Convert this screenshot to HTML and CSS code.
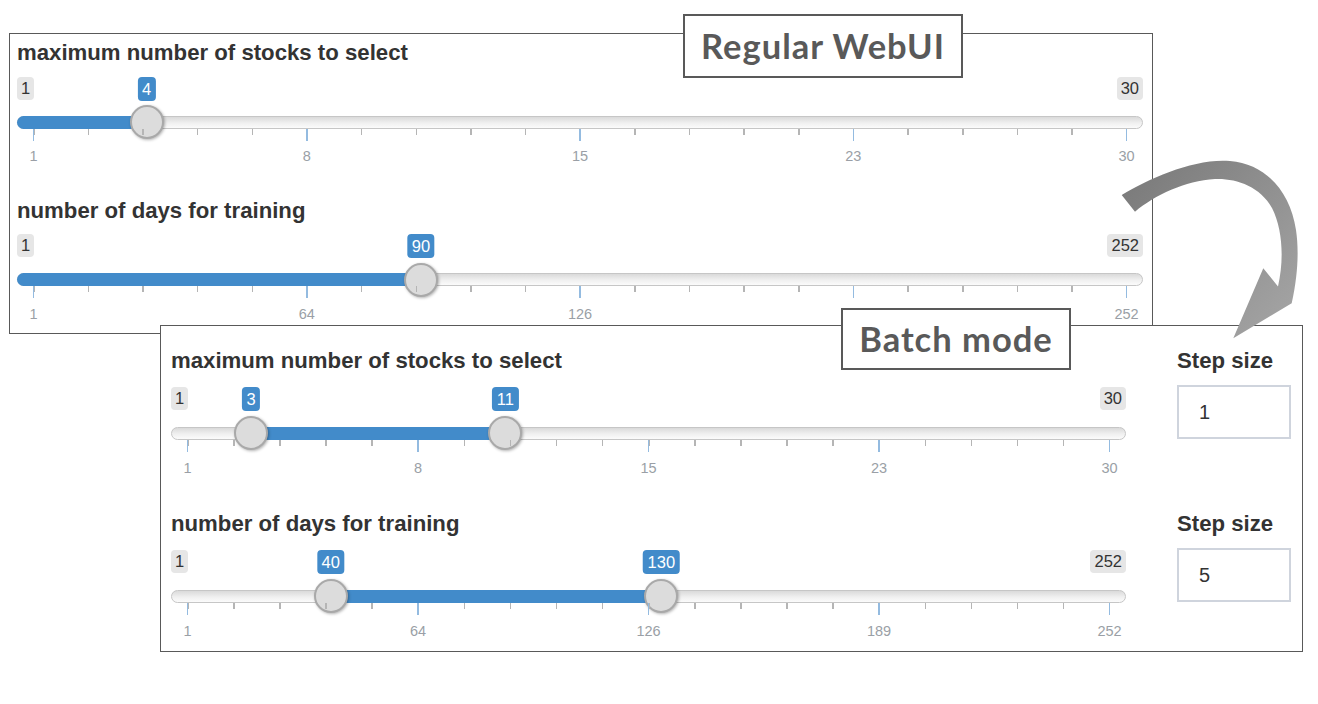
FILE: index.html
```html
<!DOCTYPE html>
<html lang="en">
<head>
<meta charset="utf-8">
<title>Regular WebUI vs Batch mode</title>
<link rel="stylesheet" href="styles.css">
</head>
<body>
<div class="canvas">

  <section class="panel panel-regular">
    <div class="field">
      <div class="field-label">maximum number of stocks to select</div>
      <div class="slider" style="--b:0.10345">
        <div class="irs-top">
          <span class="minmax">1</span><span class="minmax">30</span>
          <span class="bubble to">4</span>
        </div>
        <div class="track">
          <div class="line"></div>
          <div class="bar single"></div>
          <div class="handle to"></div>
        </div>
        <div class="grid">
          <div class="minor"></div>
          <div class="marks">
            <div class="mark"><i></i><span>1</span></div>
            <div class="mark"><i></i><span>8</span></div>
            <div class="mark"><i></i><span>15</span></div>
            <div class="mark"><i></i><span>23</span></div>
            <div class="mark"><i></i><span>30</span></div>
          </div>
        </div>
      </div>
    </div>

    <div class="field">
      <div class="field-label">number of days for training</div>
      <div class="slider" style="--b:0.35458">
        <div class="irs-top">
          <span class="minmax">1</span><span class="minmax">252</span>
          <span class="bubble to">90</span>
        </div>
        <div class="track">
          <div class="line"></div>
          <div class="bar single"></div>
          <div class="handle to"></div>
        </div>
        <div class="grid">
          <div class="minor"></div>
          <div class="marks">
            <div class="mark"><i></i><span>1</span></div>
            <div class="mark"><i></i><span>64</span></div>
            <div class="mark"><i></i><span>126</span></div>
            <div class="mark"><i></i><span>189</span></div>
            <div class="mark"><i></i><span>252</span></div>
          </div>
        </div>
      </div>
    </div>
  </section>

  <section class="panel panel-batch">
    <div class="field">
      <div class="field-label">maximum number of stocks to select</div>
      <div class="slider" style="--a:0.06897;--b:0.34483">
        <div class="irs-top">
          <span class="minmax">1</span><span class="minmax">30</span>
          <span class="bubble from">3</span>
          <span class="bubble to">11</span>
        </div>
        <div class="track">
          <div class="line"></div>
          <div class="bar range"></div>
          <div class="handle from"></div>
          <div class="handle to"></div>
        </div>
        <div class="grid">
          <div class="minor"></div>
          <div class="marks">
            <div class="mark"><i></i><span>1</span></div>
            <div class="mark"><i></i><span>8</span></div>
            <div class="mark"><i></i><span>15</span></div>
            <div class="mark"><i></i><span>23</span></div>
            <div class="mark"><i></i><span>30</span></div>
          </div>
        </div>
      </div>
    </div>
    <div class="step">
      <div class="field-label">Step size</div>
      <input class="step-input" type="text" value="1" readonly>
    </div>

    <div class="field">
      <div class="field-label">number of days for training</div>
      <div class="slider" style="--a:0.15538;--b:0.51394">
        <div class="irs-top">
          <span class="minmax">1</span><span class="minmax">252</span>
          <span class="bubble from">40</span>
          <span class="bubble to">130</span>
        </div>
        <div class="track">
          <div class="line"></div>
          <div class="bar range"></div>
          <div class="handle from"></div>
          <div class="handle to"></div>
        </div>
        <div class="grid">
          <div class="minor"></div>
          <div class="marks">
            <div class="mark"><i></i><span>1</span></div>
            <div class="mark"><i></i><span>64</span></div>
            <div class="mark"><i></i><span>126</span></div>
            <div class="mark"><i></i><span>189</span></div>
            <div class="mark"><i></i><span>252</span></div>
          </div>
        </div>
      </div>
    </div>
    <div class="step">
      <div class="field-label">Step size</div>
      <input class="step-input" type="text" value="5" readonly>
    </div>
  </section>

  <div class="tag tag-regular">Regular WebUI</div>
  <div class="tag tag-batch">Batch mode</div>

  <svg class="arrow" width="218" height="200" viewBox="0 0 218 200" aria-hidden="true">
    <defs>
      <linearGradient id="arrowFill" gradientUnits="userSpaceOnUse" x1="20" y1="40" x2="190" y2="190">
        <stop offset="0" stop-color="#7b7b7b"/>
        <stop offset="1" stop-color="#a6a6a6"/>
      </linearGradient>
    </defs>
    <path fill="url(#arrowFill)" d="M 21.7 45 C 50 28, 95 8, 130 11 C 165 14, 190 40, 196 80 C 199 100, 198 125, 191.7 153.3 L 133.3 188.3 L 163.3 118.3 L 178 136.4 C 184 110, 183 80, 172 58 C 160 36, 135 28, 115 29 C 85 31, 55 45, 35 61.7 Z"/>
  </svg>

</div>
</body>
</html>
```

FILE: styles.css
```css
* { box-sizing: border-box; }

html, body {
  margin: 0;
  padding: 0;
  background: #fff;
}

body {
  font-family: "Liberation Sans", Arial, Helvetica, sans-serif;
  color: #333;
}

.canvas {
  position: relative;
  width: 1318px;
  height: 704px;
  overflow: hidden;
}

/* ---------- panels ---------- */
.panel {
  background: #fff;
  border: 1px solid #595959;
}

.panel-regular {
  --m1: 10.5px;
  --m2: 15px;
  --m3: 7.5px;
  margin: 33px 0 0 9px;
  width: 1144px;
  height: 301px;
  padding: 6px 9px 0 7px;
  display: flex;
  flex-direction: column;
  gap: 33px;
}

.panel-batch {
  --m1: 12.5px;
  --m2: 16px;
  --m3: 8px;
  position: absolute;
  left: 160px;
  top: 325px;
  width: 1143px;
  height: 327px;
  padding: 22px 11px 0 10px;
  display: grid;
  grid-template-columns: 955px 114px;
  column-gap: 51px;
  row-gap: 35.5px;
  align-content: start;
}

.field-label {
  font-weight: bold;
  font-size: 22.2px;
  line-height: 26px;
  color: #333;
  white-space: nowrap;
}

/* ---------- slider ---------- */
.slider {
  --inset: 16.5px;
  --a: 0;
  --b: 0;
}

.irs-top {
  position: relative;
  height: 24px;
  margin-top: var(--m1);
  display: flex;
  justify-content: space-between;
  align-items: flex-start;
}

.minmax {
  height: 23px;
  line-height: 23px;
  padding: 0 4px;
  font-size: 16.5px;
  color: #333;
  background: #e6e6e6;
  border-radius: 4px;
}

.bubble {
  position: absolute;
  top: 0;
  height: 24px;
  line-height: 24px;
  padding: 0 4.5px;
  font-size: 16.5px;
  color: #fff;
  background: #428bca;
  border-radius: 4px;
  white-space: nowrap;
  transform: translateX(-50%);
}

.bubble.from { left: calc(var(--inset) + (100% - 2 * var(--inset)) * var(--a)); }
.bubble.to   { left: calc(var(--inset) + (100% - 2 * var(--inset)) * var(--b)); }

.track {
  position: relative;
  height: 13px;
  margin-top: var(--m2);
}

.line {
  position: absolute;
  inset: 0;
  border: 1px solid #c6c6c6;
  border-radius: 8px;
  background: linear-gradient(#dadada, #f0f0f0 55%, #fbfbfb);
}

.bar {
  position: absolute;
  top: 0;
  bottom: 0;
  background: #428bca;
}

.bar.single {
  left: 0;
  width: calc(var(--inset) + (100% - 2 * var(--inset)) * var(--b));
  border-radius: 8px 0 0 8px;
}

.bar.range {
  left: calc(var(--inset) + (100% - 2 * var(--inset)) * var(--a));
  width: calc((100% - 2 * var(--inset)) * (var(--b) - var(--a)));
}

.handle {
  position: absolute;
  top: 50%;
  width: 34px;
  height: 34px;
  margin: -17px 0 0 -17px;
  border-radius: 50%;
  border: 2px solid #a9a9a9;
  background: #dcdcdc;
  box-shadow: 1px 1px 3px rgba(0, 0, 0, 0.3);
}

.handle.from { left: calc(var(--inset) + (100% - 2 * var(--inset)) * var(--a)); }
.handle.to   { left: calc(var(--inset) + (100% - 2 * var(--inset)) * var(--b)); }

.grid {
  position: relative;
  height: 36px;
  margin: 0 var(--inset);
}

.minor {
  position: absolute;
  top: 0;
  left: -0.75px;
  right: 0.75px;
  height: 6px;
  background: repeating-linear-gradient(90deg, #b5b5b5 0 1.5px, transparent 1.5px 5%);
}

.marks {
  position: relative;
  display: flex;
  justify-content: space-between;
}

.mark {
  width: 0;
  display: flex;
  flex-direction: column;
  align-items: center;
}

.mark i {
  display: block;
  flex: none;
  width: 1.5px;
  height: 12px;
  background: #94bbe0;
}

.mark span {
  margin-top: var(--m3);
  font-size: 14.5px;
  line-height: 17px;
  color: #9a9fa6;
  white-space: nowrap;
}

/* ---------- step size ---------- */
.step-input {
  display: block;
  margin-top: 11px;
  width: 114px;
  height: 54px;
  padding: 0 0 0 20px;
  border: 2px solid #cfd4dd;
  border-radius: 0;
  background: #fff;
  font-family: "Liberation Sans", Arial, sans-serif;
  font-size: 20px;
  color: #333;
  outline: none;
}

/* ---------- annotation tags ---------- */
.tag {
  position: absolute;
  display: flex;
  align-items: center;
  justify-content: center;
  background: #fff;
  border: 2px solid #595959;
  font-family: Lato, "Open Sans", sans-serif;
  font-weight: bold;
  font-size: 34.5px;
  line-height: 1;
  letter-spacing: 1px;
  color: #595959;
  white-space: nowrap;
}

.tag-regular {
  left: 683px;
  top: 14px;
  width: 280px;
  height: 64px;
}

.tag-batch {
  left: 841px;
  top: 308px;
  width: 230px;
  height: 62px;
}

.arrow {
  position: absolute;
  left: 1100px;
  top: 150px;
}
```
